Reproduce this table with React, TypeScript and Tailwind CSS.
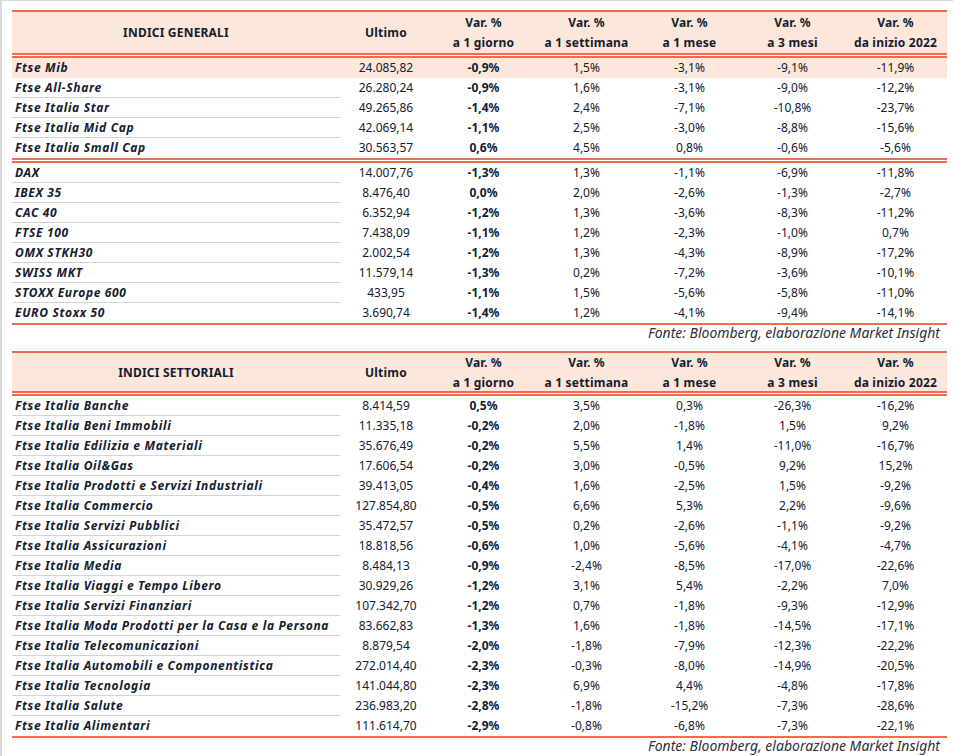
import React from "react"

type Row = [string, string, string, string, string, string, string]

const generali: Row[][] = [
  [
    ["Ftse Mib", "24.085,82", "-0,9%", "1,5%", "-3,1%", "-9,1%", "-11,9%"],
    ["Ftse All-Share", "26.280,24", "-0,9%", "1,6%", "-3,1%", "-9,0%", "-12,2%"],
    ["Ftse Italia Star", "49.265,86", "-1,4%", "2,4%", "-7,1%", "-10,8%", "-23,7%"],
    ["Ftse Italia Mid Cap", "42.069,14", "-1,1%", "2,5%", "-3,0%", "-8,8%", "-15,6%"],
    ["Ftse Italia Small Cap", "30.563,57", "0,6%", "4,5%", "0,8%", "-0,6%", "-5,6%"],
  ],
  [
    ["DAX", "14.007,76", "-1,3%", "1,3%", "-1,1%", "-6,9%", "-11,8%"],
    ["IBEX 35", "8.476,40", "0,0%", "2,0%", "-2,6%", "-1,3%", "-2,7%"],
    ["CAC 40", "6.352,94", "-1,2%", "1,3%", "-3,6%", "-8,3%", "-11,2%"],
    ["FTSE 100", "7.438,09", "-1,1%", "1,2%", "-2,3%", "-1,0%", "0,7%"],
    ["OMX STKH30", "2.002,54", "-1,2%", "1,3%", "-4,3%", "-8,9%", "-17,2%"],
    ["SWISS MKT", "11.579,14", "-1,3%", "0,2%", "-7,2%", "-3,6%", "-10,1%"],
    ["STOXX Europe 600", "433,95", "-1,1%", "1,5%", "-5,6%", "-5,8%", "-11,0%"],
    ["EURO Stoxx 50", "3.690,74", "-1,4%", "1,2%", "-4,1%", "-9,4%", "-14,1%"],
  ],
]

const settoriali: Row[][] = [
  [
    ["Ftse Italia Banche", "8.414,59", "0,5%", "3,5%", "0,3%", "-26,3%", "-16,2%"],
    ["Ftse Italia Beni Immobili", "11.335,18", "-0,2%", "2,0%", "-1,8%", "1,5%", "9,2%"],
    ["Ftse Italia Edilizia e Materiali", "35.676,49", "-0,2%", "5,5%", "1,4%", "-11,0%", "-16,7%"],
    ["Ftse Italia Oil&Gas", "17.606,54", "-0,2%", "3,0%", "-0,5%", "9,2%", "15,2%"],
    ["Ftse Italia Prodotti e Servizi Industriali", "39.413,05", "-0,4%", "1,6%", "-2,5%", "1,5%", "-9,2%"],
    ["Ftse Italia Commercio", "127.854,80", "-0,5%", "6,6%", "5,3%", "2,2%", "-9,6%"],
    ["Ftse Italia Servizi Pubblici", "35.472,57", "-0,5%", "0,2%", "-2,6%", "-1,1%", "-9,2%"],
    ["Ftse Italia Assicurazioni", "18.818,56", "-0,6%", "1,0%", "-5,6%", "-4,1%", "-4,7%"],
    ["Ftse Italia Media", "8.484,13", "-0,9%", "-2,4%", "-8,5%", "-17,0%", "-22,6%"],
    ["Ftse Italia Viaggi e Tempo Libero", "30.929,26", "-1,2%", "3,1%", "5,4%", "-2,2%", "7,0%"],
    ["Ftse Italia Servizi Finanziari", "107.342,70", "-1,2%", "0,7%", "-1,8%", "-9,3%", "-12,9%"],
    ["Ftse Italia Moda Prodotti per la Casa e la Persona", "83.662,83", "-1,3%", "1,6%", "-1,8%", "-14,5%", "-17,1%"],
    ["Ftse Italia Telecomunicazioni", "8.879,54", "-2,0%", "-1,8%", "-7,9%", "-12,3%", "-22,2%"],
    ["Ftse Italia Automobili e Componentistica", "272.014,40", "-2,3%", "-0,3%", "-8,0%", "-14,9%", "-20,5%"],
    ["Ftse Italia Tecnologia", "141.044,80", "-2,3%", "6,9%", "4,4%", "-4,8%", "-17,8%"],
    ["Ftse Italia Salute", "236.983,20", "-2,8%", "-1,8%", "-15,2%", "-7,3%", "-28,6%"],
    ["Ftse Italia Alimentari", "111.614,70", "-2,9%", "-0,8%", "-6,8%", "-7,3%", "-22,1%"],
  ],
]

const periods = ["a 1 giorno", "a 1 settimana", "a 1 mese", "a 3 mesi", "da inizio 2022"]

function DoubleRule() {
  return (
    <div className="flex flex-col">
      <div className="h-[2px] bg-[#f26b50]" />
      <div className="h-px bg-white" />
      <div className="h-[2px] bg-[#f26b50]" />
    </div>
  )
}

function Header({ title, tall }: { title: string; tall?: boolean }) {
  return (
    <div
      className={`grid grid-cols-[328px_92px_repeat(5,103px)] bg-[#fce7da] font-bold text-[12px] leading-[20px] tracking-[0.2px] ${
        tall ? "h-[41px]" : "h-[38px]"
      }`}
    >
      <div className="flex items-center justify-center">{title}</div>
      <div className="flex items-center justify-center">Ultimo</div>
      {periods.map((p) => (
        <div key={p} className="flex flex-col items-center justify-center">
          <span>Var. %</span>
          <span>{p}</span>
        </div>
      ))}
    </div>
  )
}

function DataRow({ row, last, highlight }: { row: Row; last: boolean; highlight: boolean }) {
  return (
    <div
      className={`grid grid-cols-[328px_92px_repeat(5,103px)] h-5 text-[12px] leading-[19px] ${
        highlight ? "bg-[#fce7da]" : ""
      }`}
    >
      <div
        className={`pl-[3px] font-bold italic whitespace-nowrap tracking-[0.65px] ${
          last || highlight ? "" : "border-b border-[#d3d3d3]"
        }`}
      >
        {row[0]}
      </div>
      <div className="text-center">{row[1]}</div>
      <div className="text-center font-bold">{row[2]}</div>
      <div className="text-center">{row[3]}</div>
      <div className="text-center">{row[4]}</div>
      <div className="text-center">{row[5]}</div>
      <div className="text-center">{row[6]}</div>
    </div>
  )
}

function Table({ title, groups, tall }: { title: string; groups: Row[][]; tall?: boolean }) {
  return (
    <div>
      <div className="h-[2px] bg-[#f26b50]" />
      <Header title={title} tall={tall} />
      {groups.map((group, gi) => (
        <div key={gi}>
          <DoubleRule />
          {group.map((row, i) => (
            <DataRow key={row[0]} row={row} last={i === group.length - 1} highlight={row[0] === "Ftse Mib"} />
          ))}
        </div>
      ))}
      <div className="h-[2px] bg-[#f26b50]" />
    </div>
  )
}

function Source() {
  return (
    <div className="h-[26px] pr-[7px] text-right italic text-[14px] leading-[16px] text-[#2b2f36]">
      Fonte: Bloomberg, elaborazione Market Insight
    </div>
  )
}

export default function App() {
  return (
    <div className="h-[756px] w-[953px] overflow-hidden bg-white border-t border-l-2 border-[#d9d9d9] pl-[10px] pt-[9px] font-['Noto_Sans',sans-serif] text-[#13202f]">
      <div className="w-[935px]">
        <Table title="INDICI GENERALI" groups={generali} tall />
        <Source />
        <Table title="INDICI SETTORIALI" groups={settoriali} />
        <Source />
      </div>
    </div>
  )
}
